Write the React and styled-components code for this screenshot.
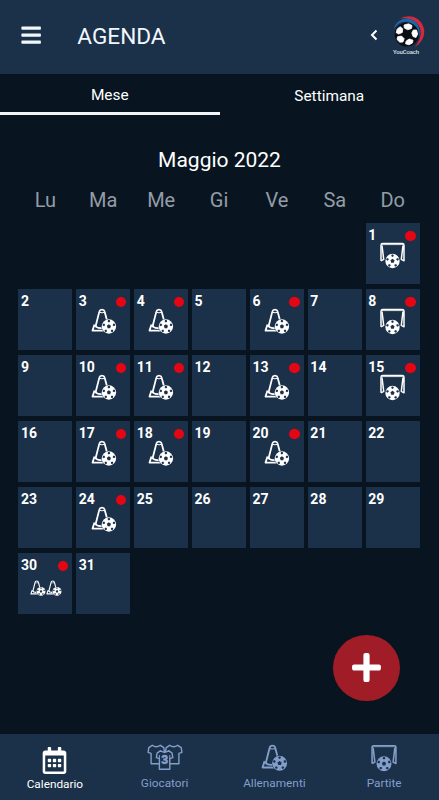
import React from 'react'
import styled, { createGlobalStyle } from 'styled-components'
import { FaBars, FaPlus, FaRegCalendarAlt } from 'react-icons/fa'

const GlobalStyle = createGlobalStyle`
  * {
    box-sizing: border-box;
  }
  body {
    margin: 0;
    background: #081521;
    font-family: Roboto, 'Liberation Sans', sans-serif;
  }
  svg {
    display: block;
  }
`

const Screen = styled.div`
  position: relative;
  display: flex;
  flex-direction: column;
  height: 800px;
  overflow: hidden;
  color: #fff;
  background: #081521;
`

//Top bar
const Header = styled.header`
  display: flex;
  align-items: center;
  flex: none;
  height: 74px;
  padding: 0 12px 4px 20px;
  background: #1b3049;
`

const Title = styled.h1`
  flex: 1;
  margin: 3px 0 0 35px;
  font-size: 22.6px;
  line-height: 28px;
  font-weight: 400;
  color: #f1f7fc;
`

const Back = styled.svg`
  width: 8px;
  height: 12px;
  margin-right: 13px;
`

//Tabs
const Tabs = styled.nav`
  display: flex;
  flex: none;
  height: 41px;
`

const Tab = styled.div`
  flex: 1;
  padding-top: ${({ $active }) => ($active ? 11 : 12)}px;
  border-bottom: 3px solid ${({ $active }) => ($active ? '#f2f5f8' : 'transparent')};
  font-size: 15.4px;
  line-height: 20px;
  text-align: center;
`

//Calendar
const Month = styled.h2`
  margin: 32px 0 0;
  font-size: 21px;
  line-height: 26px;
  font-weight: 400;
  text-align: center;
`

const Grid = styled.div`
  display: grid;
  grid-template-columns: repeat(7, 54px);
  column-gap: 3.9px;
  row-gap: 5px;
  padding-left: 18.4px;
`

const WeekDays = styled(Grid)`
  margin: 13px 0 9px;
  font-size: 20px;
  line-height: 28px;
  text-align: center;
  color: #949ca6;
`

const Day = styled.div`
  position: relative;
  grid-column-start: ${({ $column }) => $column || 'auto'};
  display: flex;
  flex-direction: column;
  height: 61px;
  padding: 4px 0 0 2.5px;
  background: #1b3049;
  font-size: 14px;
  line-height: 17px;
  font-weight: 700;
`

const Dot = styled.span`
  position: absolute;
  top: 7.5px;
  right: 4px;
  width: 10.5px;
  height: 10.5px;
  border-radius: 50%;
  background: #e60613;
`

const Events = styled.div`
  display: flex;
  justify-content: center;
  margin-top: ${({ $small }) => ($small ? 6 : -2)}px;
  padding-right: 2px;
`

const AddButton = styled.button`
  position: absolute;
  left: 333px;
  top: 634.5px;
  display: flex;
  align-items: center;
  justify-content: center;
  width: 66.5px;
  height: 66.5px;
  padding: 0;
  border: 0;
  border-radius: 50%;
  color: #fff;
  background: #a01c26;
`

//Bottom bar
const BottomBar = styled.nav`
  display: flex;
  flex: none;
  height: 66px;
  margin-top: auto;
  background: #1b3049;
`

const BottomItem = styled.div`
  display: flex;
  flex: 1;
  flex-direction: column;
  align-items: center;
  justify-content: space-between;
  padding: ${({ $active }) => ($active ? '13px 0 8px' : '10px 0 9px')};
  font-size: 11.8px;
  line-height: 16px;
  color: ${({ $active }) => ($active ? '#fff' : '#839fc9')};
`

const pentagon = (cx, cy, r, turn = 0) =>
  [0, 1, 2, 3, 4]
    .map(i => {
      const a = ((i * 72 - 90 + turn) * Math.PI) / 180
      return `${(cx + r * Math.cos(a)).toFixed(2)},${(cy + r * Math.sin(a)).toFixed(2)}`
    })
    .join(' ')

const Ball = ({ x, y, r = 7.2 }) => (
  <g stroke="none">
    <circle cx={x} cy={y} r={r + 0.4} fill="#1b3049" />
    <circle cx={x} cy={y} r={r} fill="currentColor" />
    <polygon points={pentagon(x, y, r * 0.3)} fill="#1b3049" />
    {[0, 72, 144, 216, 288].map(deg => {
      const a = ((deg - 90) * Math.PI) / 180
      return (
        <polygon
          key={deg}
          points={pentagon(x + r * 0.74 * Math.cos(a), y + r * 0.74 * Math.sin(a), r * 0.19, deg + 180)}
          fill="#1b3049"
        />
      )
    })}
  </g>
)

const ConeIcon = ({ size = 26 }) => (
  <svg width={size} height={size} viewBox="0 0 26 26" fill="none" stroke="currentColor" strokeWidth="1.8" strokeLinejoin="round">
    <path d="M4.4 19L8.4 3.4Q8.800 1.600 11 1.600T13.600 3.400L16.300 13.500" />
    <path d="M8.400 4.300Q11 5.300 13.600 4.300" strokeWidth="1" />
    <path d="M3.500 16.500L1.500 22.600H13" />
    <path d="M4.400 17.500Q5.500 20.500 11 20" />
    <Ball x={17.9} y={18.5} />
  </svg>
)

const GoalIcon = ({ size = 27 }) => (
  <svg width={size} height={size} viewBox="0 0 27 27" fill="none" stroke="currentColor" strokeWidth="1.5" strokeLinejoin="round">
    <path d="M2 18.800V3.200Q2 1.600 3.700 1.600H23.300Q25 1.600 25 3.200V18.800L22.300 17.400L24 3.500" />
    <path d="M2 18.800L4.700 17.400L3 3.500" />
    <path d="M3 2.600H24" strokeWidth="0.8" />
    <Ball x={13.5} y={19} />
  </svg>
)

const shirt = 'M5 1L1.5 3.4L0.8 8L3.8 9V19.5H14.2V9L17.2 8L16.5 3.4L13 1Q9 4 5 1Z'

const ShirtsIcon = () => (
  <svg width="36" height="27" viewBox="0 0 36 27" fill="#1b3049" stroke="currentColor" strokeWidth="1.4" strokeLinejoin="round">
    <path d={shirt} transform="translate(0.3 0.3)" />
    <path d={shirt} transform="translate(17.7 0.3)" />
    <path d={shirt} transform="translate(8.6 5.7)" />
    <path d="M12.4 11V15M22.8 11V15" strokeWidth="1" />
    <text x="17.7" y="20.4" textAnchor="middle" fontSize="12" fontWeight="900" fill="currentColor" stroke="currentColor" strokeWidth="0.4">
      3
    </text>
  </svg>
)

//Club ball with the red and blue swoosh
const Logo = () => (
  <svg width="36" height="42" viewBox="0 0 36 42">
    <path d="M9 4.500C19-1 30.500 3.500 33 15C34.500 23.500 29 30 24 33C28.500 27 31 21 29 14.500C26.500 6.500 18 3 9 4.500Z" fill="#d02a3c" />
    <path d="M3 15C4 7.500 12 3 19.500 5C27 7.500 30.500 15.500 28 23.500C27.500 13.500 21.500 8 14.500 7.800C9 7.800 5.500 11 3 15Z" fill="#1b66a8" />
    <circle cx="15.7" cy="20.5" r="12" fill="#0a0d14" />
    <g fill="#fff" stroke="#fff" strokeWidth="0.8" strokeLinejoin="round">
      <path d="M13 11L17.500 9.800L21 11.500L20.500 14.500L16.700 15.700L13.300 14Z" />
      <path d="M22.300 16L25.500 16L26.700 20L25 23.500L22 22.500L20.800 19Z" />
      <path d="M15.200 27L18.200 25L22 26.200L21.500 29L18 30.800L14.500 29.800Z" />
      <path d="M6.500 22.800L10.500 22L13.200 24.700L12 28L8.800 28.200L6 25.500Z" />
      <path d="M6.200 15L9.200 12.700L11.700 14.800L11.300 18.500L7.700 20L5.200 18.700Z" />
    </g>
    <text x="15" y="39.5" textAnchor="middle" fontSize="6" fontWeight="500" fill="#dbe3ec" textLength="26">
      YouCoach
    </text>
  </svg>
)

const weekDays = ['Lu', 'Ma', 'Me', 'Gi', 'Ve', 'Sa', 'Do']

const trainings = [3, 4, 6, 10, 11, 13, 17, 18, 20, 24]
const matches = [1, 8, 15]
const doubleTrainings = [30]

const days = Array.from({ length: 31 }, (_, i) => i + 1)

const CalendarDay = ({ day }) => {
  const double = doubleTrainings.includes(day)
  const training = trainings.includes(day)
  const match = matches.includes(day)

  return (
    <Day $column={day === 1 && 7}>
      {day}
      {(double || training || match) && <Dot />}
      <Events $small={double}>
        {training && <ConeIcon />}
        {match && <GoalIcon />}
        {double && <ConeIcon size={16} />}
        {double && <ConeIcon size={16} />}
      </Events>
    </Day>
  )
}

const App = () => (
  <Screen>
    <GlobalStyle />
    <Header>
      <FaBars size={22.3} color="#f1f7fc" />
      <Title>AGENDA</Title>
      <Back viewBox="0 0 8 12" fill="none" stroke="#fff" strokeWidth="2">
        <path d="M6.5 1.5L2 6L6.5 10.5" />
      </Back>
      <Logo />
    </Header>
    <Tabs>
      <Tab $active>Mese</Tab>
      <Tab>Settimana</Tab>
    </Tabs>
    <Month>Maggio 2022</Month>
    <WeekDays>
      {weekDays.map(name => (
        <span key={name}>{name}</span>
      ))}
    </WeekDays>
    <Grid>
      {days.map(day => (
        <CalendarDay key={day} day={day} />
      ))}
    </Grid>
    <AddButton aria-label="Aggiungi">
      <FaPlus size={33} />
    </AddButton>
    <BottomBar>
      <BottomItem $active>
        <FaRegCalendarAlt size={27} />
        Calendario
      </BottomItem>
      <BottomItem>
        <ShirtsIcon />
        Giocatori
      </BottomItem>
      <BottomItem>
        <ConeIcon size={27} />
        Allenamenti
      </BottomItem>
      <BottomItem>
        <GoalIcon size={28} />
        Partite
      </BottomItem>
    </BottomBar>
  </Screen>
)

export default App
